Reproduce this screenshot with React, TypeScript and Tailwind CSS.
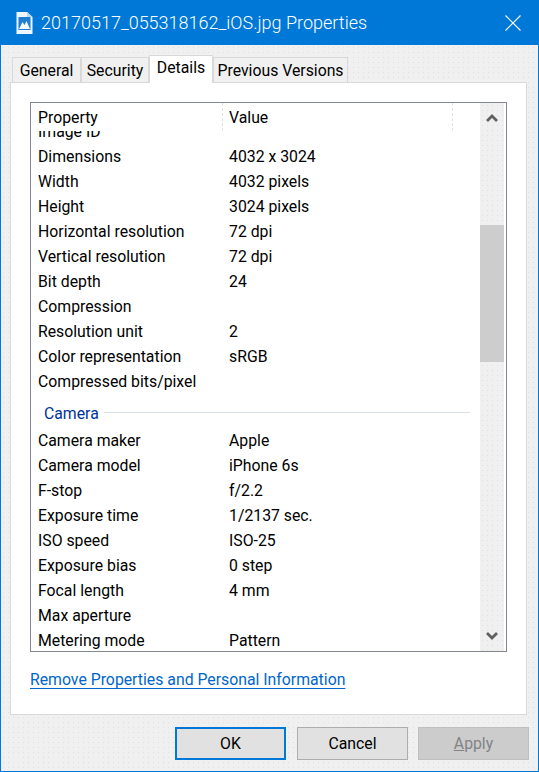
import React from "react";

const group1: [string, string][] = [
  ["Image ID", ""],
  ["Dimensions", "4032 x 3024"],
  ["Width", "4032 pixels"],
  ["Height", "3024 pixels"],
  ["Horizontal resolution", "72 dpi"],
  ["Vertical resolution", "72 dpi"],
  ["Bit depth", "24"],
  ["Compression", ""],
  ["Resolution unit", "2"],
  ["Color representation", "sRGB"],
  ["Compressed bits/pixel", ""],
];
const group2: [string, string][] = [
  ["Camera maker", "Apple"],
  ["Camera model", "iPhone 6s"],
  ["F-stop", "f/2.2"],
  ["Exposure time", "1/2137 sec."],
  ["ISO speed", "ISO-25"],
  ["Exposure bias", "0 step"],
  ["Focal length", "4 mm"],
  ["Max aperture", ""],
  ["Metering mode", "Pattern"],
];

const dots =
  "bg-[#f0f0f0] bg-[radial-gradient(#e0e0e0_0.6px,transparent_0.7px)] bg-[length:5px_5px]";

function Row({ p, v }: { p: string; v: string }) {
  return (
    <div className="flex h-[25px] shrink-0 items-center whitespace-nowrap pl-[7px]">
      <span className="w-[191px]">{p}</span>
      <span>{v}</span>
    </div>
  );
}

function Tab({ label, className }: { label: string; className: string }) {
  return (
    <div
      className={`flex items-center justify-center border border-b-0 border-[#d9d9d9] ${className}`}
    >
      {label}
    </div>
  );
}

export default function App() {
  return (
    <div
      className={`flex h-[772px] w-[539px] flex-col overflow-hidden border border-t-0 border-[#0078d7] text-[15.8px] leading-none text-black ${dots}`}
      style={{ fontFamily: "Roboto, 'Noto Sans', sans-serif" }}
    >
      <div className="flex h-[45px] shrink-0 items-center bg-[#0078d7] pl-[15px] pr-[15px] text-white">
        <svg width="17" height="22" viewBox="0 0 17 22" className="shrink-0">
          <path d="M0.5 0h10.5l5.5 5v17H0.5z" fill="#eef5fb" />
          <path d="M11 0v5h5.5z" fill="#b9d8f2" />
          <rect x="2.5" y="5" width="12" height="13" fill="#1f7fd0" />
          <path d="M3 17l3.5-7 2 3 2-4 3.5 8z" fill="#f4f9fd" />
        </svg>
        <span className="ml-[8px] flex-1 whitespace-nowrap text-[18px] font-light">
          20170517_055318162_iOS.jpg Properties
        </span>
        <svg width="16" height="16" viewBox="0 0 16 16" className="mr-[2px] shrink-0">
          <path d="M0.5 0.5L15.5 15.5M15.5 0.5L0.5 15.5" stroke="#fff" strokeWidth="1.1" />
        </svg>
      </div>

      <div className="flex h-[37px] shrink-0 items-end pl-[11px]">
        <Tab label="General" className="z-0 h-[25px] w-[69px] bg-[#f0f0f0] pt-[1px]" />
        <Tab label="Security" className="z-0 h-[25px] w-[68px] bg-[#f0f0f0] pt-[1px]" />
        <Tab
          label="Details"
          className="z-10 -mb-px h-[28px] w-[64px] bg-white pb-[3px]"
        />
        <Tab label="Previous Versions" className="z-0 h-[25px] w-[135px] bg-[#f0f0f0] pt-[1px]" />
      </div>

      <div className="ml-[9px] mr-[11px] flex h-[633px] shrink-0 flex-col border border-[#d9d9d9] bg-white px-[19px] pt-[19px]">
        <div className="flex h-[550px] shrink-0 border border-[#828790]">
          <div className="flex min-w-0 flex-1 flex-col">
            <div className="z-10 flex h-[28px] shrink-0 items-center bg-white">
              <span className="flex h-full w-[192px] items-center border-r border-dashed border-[#e0e0e0] pl-[7px] pt-[2px]">
                Property
              </span>
              <span className="flex h-full w-[230px] items-center border-r border-dashed border-[#e0e0e0] pl-[6px] pt-[2px]">
                Value
              </span>
            </div>
            <div className="flex min-h-0 flex-1 flex-col overflow-hidden">
              <div className="-mt-[12px] flex flex-col">
                {group1.map(([p, v]) => (
                  <Row key={p} p={p} v={v} />
                ))}
                <div className="flex h-[34px] shrink-0 items-start pl-[13px] pr-[10px]">
                  <span className="mt-[12px] text-[#003399]">Camera</span>
                  <div className="ml-[5px] mt-[18px] h-px flex-1 bg-[#d8e0e6]" />
                </div>
                {group2.map(([p, v]) => (
                  <Row key={p} p={p} v={v} />
                ))}
              </div>
            </div>
          </div>
          <div className={`mr-[2px] flex w-[24px] shrink-0 flex-col ${dots}`}>
            <div className="flex h-[28px] items-center justify-center pt-[2px]">
              <svg width="12" height="8" viewBox="0 0 12 8">
                <path d="M1 7L6 2L11 7" fill="none" stroke="#606060" strokeWidth="2.8" />
              </svg>
            </div>
            <div className="mt-[94px] h-[137px] bg-[#cdcdcd]" />
            <div className="flex-1" />
            <div className="flex h-[28px] items-center justify-center pb-[2px]">
              <svg width="12" height="8" viewBox="0 0 12 8">
                <path d="M1 1L6 6L11 1" fill="none" stroke="#606060" strokeWidth="2.8" />
              </svg>
            </div>
          </div>
        </div>
        <div className="mt-[20px]">
          <span className="text-[#0066cc] underline decoration-[#0066cc] underline-offset-[3px]">
            Remove Properties and Personal Information
          </span>
        </div>
      </div>

      <div className="mt-[12px] flex justify-end pr-[9px]">
        <div className="flex h-[33px] w-[111px] items-center justify-center border-2 border-[#0078d7] bg-[#e1e1e1]">
          OK
        </div>
        <div className="ml-[11px] flex h-[33px] w-[111px] items-center justify-center border border-[#adadad] bg-[#e1e1e1]">
          Cancel
        </div>
        <div className="ml-[10px] flex h-[33px] w-[111px] items-center justify-center border border-[#bfbfbf] bg-[#cccccc] text-[#838383]">
          <span>
            <span className="underline">A</span>pply
          </span>
        </div>
      </div>
    </div>
  );
}
